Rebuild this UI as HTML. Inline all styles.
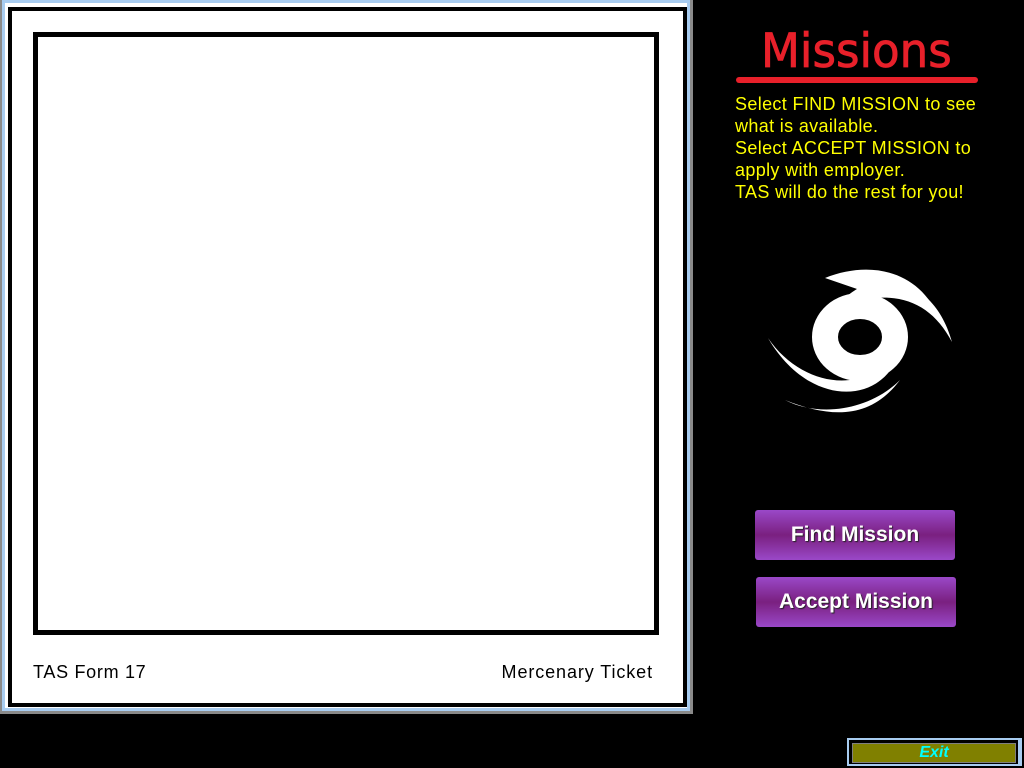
<!DOCTYPE html>
<html><head><style>
body{margin:0;width:1024px;height:768px;background:#000;position:relative;overflow:hidden;font-family:"Liberation Sans",sans-serif}
.a{position:absolute}
</style></head><body>
<div class="a" style="left:0;top:0;width:693px;height:714px;background:#8a8a8a"></div>
<div class="a" style="left:2px;top:0;width:688px;height:711px;background:#a8ccf0"></div>
<div class="a" style="left:5px;top:3px;width:682px;height:705px;background:#fff"></div>
<div class="a" style="left:8px;top:7px;width:671px;height:692px;border:4px solid #000;background:#fff"></div>
<div class="a" style="left:33px;top:32px;width:616px;height:593px;border:5px solid #000;background:#fff"></div>
<div class="a" style="left:33px;top:662px;font-size:18px;color:#000;letter-spacing:0.7px">TAS Form 17</div>
<div class="a" style="left:400px;width:253px;text-align:right;top:662px;font-size:18px;color:#000;letter-spacing:0.9px">Mercenary Ticket</div>

<div class="a" style="left:761px;top:24px;font-size:47px;color:#e8202a;font-family:'DejaVu Sans',sans-serif;transform:scaleX(0.96);transform-origin:left;-webkit-text-stroke:0.8px #e8202a">Missions</div>
<div class="a" style="left:736px;top:77px;width:242px;height:6px;border-radius:3px;background:#e8202a"></div>
<div class="a" style="left:735px;top:93px;font-size:18px;line-height:22px;color:#ffff00;letter-spacing:0.35px">Select FIND MISSION to see<br>what is available.<br>Select ACCEPT MISSION to<br>apply with employer.<br>TAS will do the rest for you!</div>

<svg class="a" style="left:760px;top:260px" width="200" height="160" viewBox="0 0 200 160">
<ellipse cx="100" cy="77" rx="35" ry="31" fill="none" stroke="#fff" stroke-width="26"/>
<path d="M85 38 C120 5 175 20 192 82 C175 50 150 35 115 38 Z" fill="#fff"/>
<path d="M65 18 C110 0 160 10 180 60 C160 30 130 22 100 30 Z" fill="#fff"/>
<path d="M140 90 C125 145 50 150 8 78 C40 125 100 135 130 98 Z" fill="#fff"/>
<path d="M25 140 C60 158 110 150 140 120 C110 160 70 158 25 140 Z" fill="#fff"/>
</svg>

<div class="a" style="left:755px;top:510px;width:200px;height:50px;border-radius:3px;background:linear-gradient(#9a48c8,#7a2080 50%,#9a48c8);color:#fff;font-weight:bold;font-size:21px;line-height:50px;text-align:center;text-shadow:1px 1px 1px #222">Find Mission</div>
<div class="a" style="left:756px;top:577px;width:200px;height:50px;border-radius:3px;background:linear-gradient(#9a48c8,#7a2080 50%,#9a48c8);color:#fff;font-weight:bold;font-size:21px;line-height:50px;text-align:center;text-shadow:1px 1px 1px #222">Accept Mission</div>

<div class="a" style="left:847px;top:738px;width:175px;height:28px;background:#a8ccf0"></div>
<div class="a" style="left:849px;top:740px;width:169px;height:24px;background:#000"></div>
<div class="a" style="left:852px;top:743px;width:164px;height:20px;background:#808080"></div>
<div class="a" style="left:853px;top:744px;width:162px;height:18px;background:#808000;color:#00ffff;font-style:italic;font-weight:bold;font-size:16px;line-height:18px;text-align:center">Exit</div>
</body></html>
